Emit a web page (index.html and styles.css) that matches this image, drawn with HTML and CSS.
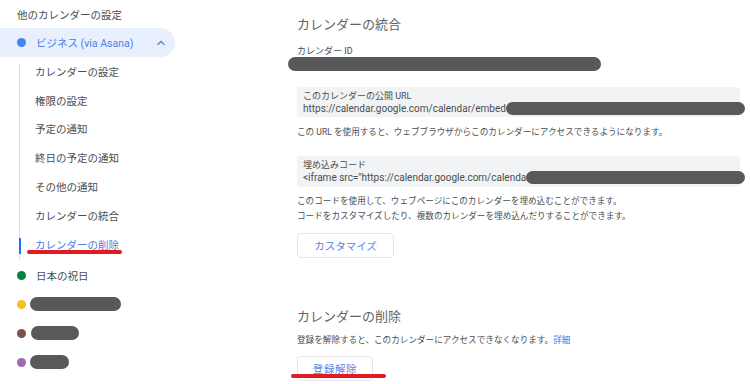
FILE: index.html
```html
<!DOCTYPE html>
<html lang="ja">
<head>
<meta charset="utf-8">
<title>カレンダーの設定</title>
<link rel="stylesheet" href="styles.css">
</head>
<body>
<div class="page">
  <nav class="side">
    <div class="side-title">他のカレンダーの設定</div>
    <div class="cal-row active">
      <span class="dot dot-blue"></span>
      <span class="cal-name">ビジネス (via Asana)</span>
      <svg class="chev" width="10" height="6" viewBox="0 0 10 6"><path d="M1.5 4.8 L5 1.4 L8.5 4.8" fill="none" stroke="#5b86e5" stroke-width="1.4"/></svg>
    </div>
    <ul class="sub">
      <li>カレンダーの設定</li>
      <li>権限の設定</li>
      <li>予定の通知</li>
      <li>終日の予定の通知</li>
      <li>その他の通知</li>
      <li>カレンダーの統合</li>
      <li class="current">カレンダーの削除</li>
    </ul>
    <div class="cal-list">
      <div class="cal-row"><span class="dot dot-green"></span><span class="cal-name">日本の祝日</span></div>
      <div class="cal-row"><span class="dot dot-yellow"></span><span class="redact bar-lg"></span></div>
      <div class="cal-row"><span class="dot dot-brown"></span><span class="redact bar-md"></span></div>
      <div class="cal-row"><span class="dot dot-purple"></span><span class="redact bar-sm"></span></div>
    </div>
  </nav>

  <main class="main">
    <h2 class="sec-title">カレンダーの統合</h2>
    <div class="field-label">カレンダー ID</div>
    <div class="redact id-bar"></div>

    <div class="code-box">
      <div class="box-label">このカレンダーの公開 URL</div>
      <div class="box-line"><span class="box-text">https://calendar.google.com/calendar/embed</span><span class="redact line-bar"></span></div>
    </div>
    <p class="desc first">この URL を使用すると、ウェブブラウザからこのカレンダーにアクセスできるようになります。</p>

    <div class="code-box embed">
      <div class="box-label">埋め込みコード</div>
      <div class="box-line"><span class="box-text">&lt;iframe src="https://calendar.google.com/calenda</span><span class="redact line-bar"></span></div>
    </div>
    <p class="desc multi">このコードを使用して、ウェブページにこのカレンダーを埋め込むことができます。<br>コードをカスタマイズしたり、複数のカレンダーを埋め込んだりすることができます。</p>
    <button class="btn btn-custom">カスタマイズ</button>

    <h2 class="sec-title second">カレンダーの削除</h2>
    <p class="desc del">登録を解除すると、このカレンダーにアクセスできなくなります。<a class="link">詳細</a></p>
    <button class="btn btn-unsub">登録解除</button>
  </main>

  <span class="mark mark-left"></span>
  <span class="mark mark-right"></span>
</div>
</body>
</html>
```

FILE: styles.css
```css
html, body {
  margin: 0;
  padding: 0;
  background: #ffffff;
}
body {
  font-family: "Roboto", "Noto Sans CJK JP", sans-serif;
  color: #4a4e52;
  width: 750px;
  height: 384px;
  overflow: hidden;
}
.page {
  position: relative;
  display: flex;
  width: 750px;
  height: 384px;
}

/* sidebar */
.side {
  width: 175px;
  flex: none;
  font-size: 10.5px;
}
.side-title {
  height: 28px;
  display: flex;
  align-items: center;
  padding-left: 17px;
}
.cal-row {
  height: 29px;
  display: flex;
  align-items: center;
  padding-left: 17px;
}
.cal-row.active {
  background: #e8f0fe;
  border-radius: 0 14.5px 14.5px 0;
  color: #4a7fe6;
  padding-right: 9px;
}
.chev {
  margin-left: auto;
  display: block;
}
.dot {
  width: 9px;
  height: 9px;
  border-radius: 50%;
  flex: none;
  margin-right: 10px;
}
.dot-blue { background: #4285f4; }
.dot-green { background: #0b8043; }
.dot-yellow { background: #f6bf26; margin-right: 4px; }
.dot-brown { background: #795548; margin-right: 5px; }
.dot-purple { background: #9e69af; margin-right: 4px; }

.sub {
  list-style: none;
  margin: 0 0 0 19px;
  padding: 0;
  position: relative;
}
.sub::before {
  content: "";
  position: absolute;
  left: 0;
  top: 7px;
  bottom: 0;
  width: 1px;
  background: #dadce0;
}
.sub li {
  height: 28.8px;
  display: flex;
  align-items: center;
  padding-left: 16px;
  position: relative;
}
.sub li.current {
  color: #4a7fe6;
}
.sub li.current::before {
  content: "";
  position: absolute;
  left: 0;
  top: 8px;
  height: 16px;
  width: 1.5px;
  background: #1a73e8;
}
.cal-list {
  margin-top: 2px;
}

.redact {
  display: inline-block;
  background: #58595b;
  border-radius: 7px;
  height: 14px;
}
.bar-lg { width: 91px; }
.bar-md { width: 48px; }
.bar-sm { width: 39px; }

/* main */
.main {
  margin-left: 122px;
  width: 443px;
  padding-top: 15px;
}
.sec-title {
  margin: 0;
  font-size: 13px;
  font-weight: 400;
  line-height: 20px;
  color: #5f6368;
}
.sec-title.second {
  margin-top: 48.5px;
}
.field-label {
  margin-top: 10px;
  font-size: 9px;
  line-height: 12px;
}
.id-bar {
  display: block;
  margin-left: -9px;
  width: 313px;
  height: 14px;
}
.code-box {
  margin-top: 16px;
  background: #f1f3f4;
  border-radius: 3px;
  padding: 4px 6px 3px;
}
.code-box.embed {
  margin-top: 18px;
  padding-bottom: 4px;
}
.box-label {
  font-size: 9px;
  line-height: 11px;
}
.box-line {
  display: flex;
  align-items: center;
  height: 12px;
  margin-right: -11px;
  font-size: 10px;
}
.box-text {
  white-space: nowrap;
}
.line-bar {
  flex: 1;
  height: 13px;
  border-radius: 6.5px;
}
.desc {
  margin: 0;
  font-size: 8.6px;
  line-height: 12px;
}
.desc.first {
  margin-top: 9px;
}
.desc.multi {
  margin-top: 7px;
  line-height: 15px;
}
.desc.del {
  margin-top: 7px;
  line-height: 13px;
}
.link {
  color: #3b78e7;
}
.btn {
  display: block;
  box-sizing: border-box;
  height: 25px;
  padding: 0;
  border: 1px solid #e3e5e8;
  border-radius: 4px;
  background: #ffffff;
  color: #5586e8;
  font-family: "Roboto", "Noto Sans CJK JP", sans-serif;
  font-size: 10.5px;
}
.btn-custom {
  width: 97px;
  margin-top: 9px;
}
.btn-unsub {
  width: 76px;
  margin-top: 9px;
  letter-spacing: 0.6px;
}

/* red annotation underlines */
.mark {
  position: absolute;
  height: 4px;
  border-radius: 2px;
  background: #e01b22;
}
.mark-left {
  left: 27px;
  top: 250px;
  width: 95px;
}
.mark-right {
  left: 291px;
  top: 373.5px;
  width: 95px;
}
```
